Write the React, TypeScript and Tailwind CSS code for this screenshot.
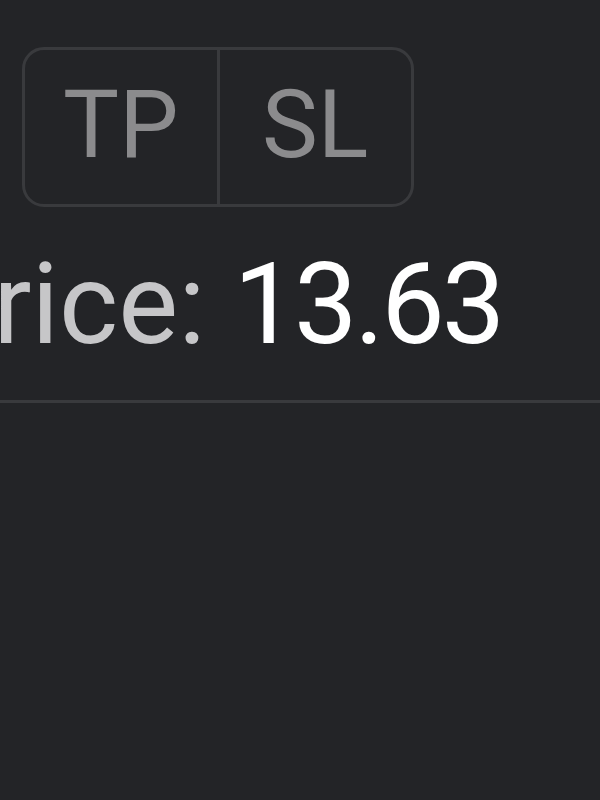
export default function App() {
  return (
    <div className="min-h-screen w-full overflow-hidden bg-[#232427] pt-[47px] font-['Roboto',sans-serif]">
      <div className="ml-[22px] flex h-[160px] w-[392px] rounded-[22px] border-[3px] border-[#393a3d]">
        <div className="flex flex-1 items-center justify-center border-r-[3px] border-[#393a3d] pb-1 text-[94px] leading-none text-[#8b8b8d]">
          TP
        </div>
        <div className="flex flex-1 items-center justify-center pb-1 text-[94px] leading-none text-[#8b8b8d]">
          SL
        </div>
      </div>
      <div className="ml-[-78px] mt-[41px] whitespace-nowrap text-[113px] leading-none">
        <span className="text-[#c6c6c8]">Price: </span>
        <span className="tracking-[-3px] text-white">13.63</span>
      </div>
      <div className="mt-[39px] h-[3px] w-full bg-[#393a3d]" />
    </div>
  );
}
